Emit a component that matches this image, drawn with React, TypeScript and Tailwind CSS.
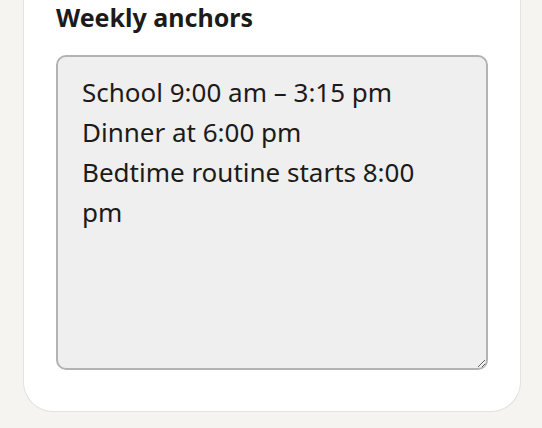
export default function App() {
  return (
    <div className="min-h-[428px] bg-[#f5f4f0] px-[23px] pb-4 font-['Noto_Sans',sans-serif]">
      <div className="w-[498px] rounded-b-[30px] border border-t-0 border-[#e4e2dc] bg-white px-[32px] pb-[41px] pt-[1px]">
        <h2 className="text-[25px] font-bold leading-[32px] text-[#1c1b19]">Weekly anchors</h2>
        <textarea
          className="mt-[22px] block h-[315px] w-[432px] rounded-[10px] border-2 border-[#b3b3b3] bg-[#efefef] py-[15px] pl-[24px] pr-[40px] text-[26px] leading-[40px] text-[#1c1b19] outline-none"
          defaultValue={"School 9:00 am – 3:15 pm\nDinner at 6:00 pm\nBedtime routine starts 8:00 pm"}
        />
      </div>
    </div>
  );
}
